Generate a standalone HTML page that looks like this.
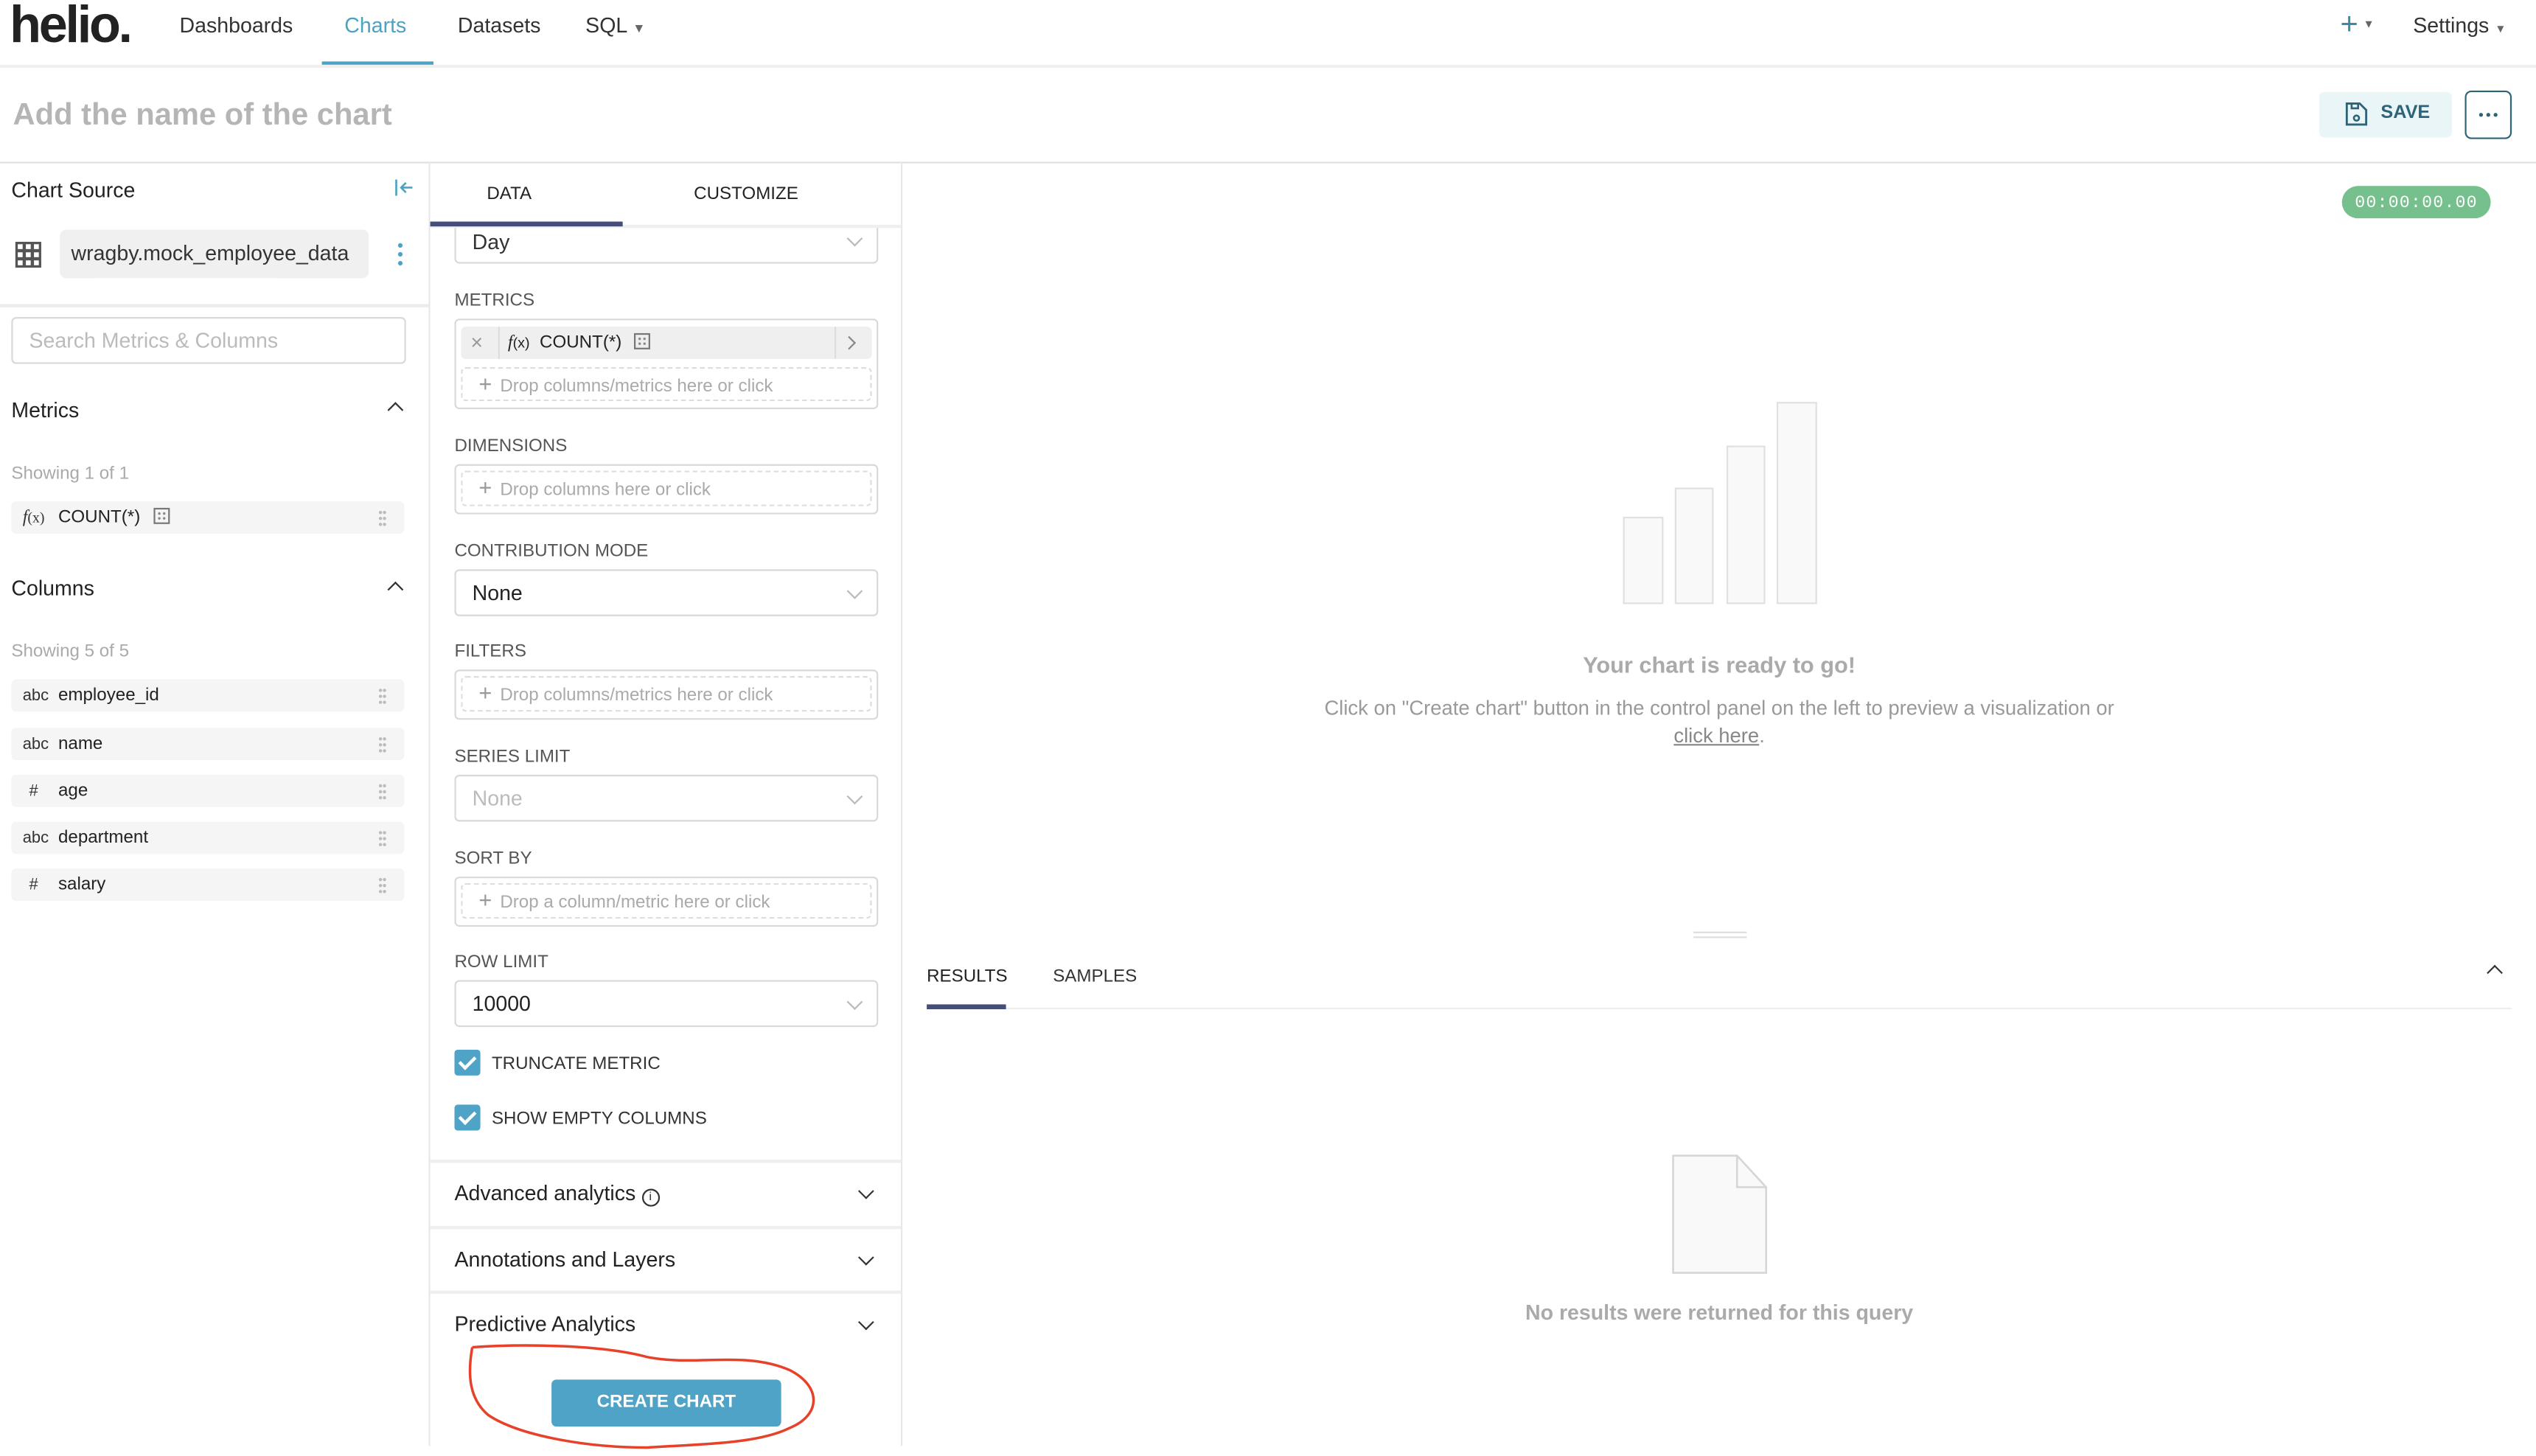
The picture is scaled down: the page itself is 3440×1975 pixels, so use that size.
<!DOCTYPE html>
<html><head><meta charset="utf-8"><style>
html,body{margin:0;padding:0;background:#fff;overflow:hidden;width:3440px;height:1960px}
#w{position:absolute;left:0;top:0;width:1568px;height:894px;transform:scale(2.19388);transform-origin:0 0;font-family:"Liberation Sans",sans-serif;color:#333}
.a{position:absolute;white-space:nowrap}
.hl{position:absolute;height:1px;background:#e6e6e6}
.vl{position:absolute;width:1px;background:#e6e6e6}
.lbl{font-size:11px;color:#555;}
.box{position:absolute;border:1px solid #d9d9d9;border-radius:3px;background:#fff;box-sizing:border-box}
.dash{position:absolute;border:1px dashed #ddd;border-radius:3px;box-sizing:border-box;font-size:11px;color:#aaa;padding-left:10px;line-height:19px}
.dash b{font-weight:normal;font-size:14px;color:#999;margin-right:5px}
.sel{position:absolute;left:281px;width:262px;border:1px solid #d9d9d9;border-radius:3px;box-sizing:border-box;font-size:13px;padding-left:10px}
.chev{position:absolute;right:10px;width:6px;height:6px;border-right:1px solid #bbb;border-bottom:1px solid #bbb;transform:rotate(45deg)}
.row{position:absolute;left:7px;width:243px;height:20px;background:#f5f5f5;border-radius:3px;font-size:11px;line-height:20px}
.row .t{position:absolute;left:7px;top:0;line-height:21px;font-size:10px;color:#333}
.row .n{position:absolute;left:29px;color:#222}
.grip{position:absolute;right:11px;top:5px;width:5px;height:11px;background:radial-gradient(circle,#bbb 0.9px,transparent 1.1px) 0 0/2.5px 3.7px}
.cb{position:absolute;left:281px;width:16px;height:16px;background:#4fa3c7;border-radius:2px}
.cb:after{content:"";position:absolute;left:5px;top:2px;width:4px;height:8px;border-right:2px solid #fff;border-bottom:2px solid #fff;transform:rotate(45deg)}
.dn{position:absolute;left:532px;width:6px;height:6px;border-right:1px solid #333;border-bottom:1px solid #333;transform:rotate(45deg)}
.calc{display:inline-block;width:8px;height:8px;border:1px solid #777;margin-left:5px;vertical-align:-1px;position:relative}
.calc:before{content:"";position:absolute;left:1px;top:1px;width:6px;height:6px;background:radial-gradient(circle,#888 0.7px,transparent 0.9px) 0 0/3px 3px}
</style></head><body><div id="w">
<!-- header -->
<div class="a" style="left:6px;top:-3px;font-size:32px;font-weight:bold;color:#222;letter-spacing:-1.5px">helio.</div>
<div class="a" style="left:111px;top:8px;font-size:13px;color:#333">Dashboards</div>
<div class="a" style="left:213px;top:8px;font-size:13px;color:#4ba3c3">Charts</div>
<div style="position:absolute;left:199px;top:38px;width:69px;height:3px;background:#4ba3c3"></div>
<div class="a" style="left:283px;top:8px;font-size:13px;color:#333">Datasets</div>
<div class="a" style="left:362px;top:8px;font-size:13px;color:#333">SQL <span style="font-size:8px;color:#666">▼</span></div>
<div class="a" style="left:1447px;top:5px;font-size:19px;color:#3d8aa8">+<span style="font-size:7px;color:#666;vertical-align:4px;margin-left:3px">▼</span></div>
<div class="a" style="left:1492px;top:8px;font-size:13px;color:#333">Settings <span style="font-size:7px;color:#666">▼</span></div>
<div class="hl" style="left:0;top:40px;width:1568px;background:#f0f0f0;height:2px"></div>
<!-- title -->
<div class="a" style="left:8px;top:61px;font-size:19px;font-weight:bold;color:#b5b5b5">Add the name of the chart</div>
<div style="position:absolute;left:1434px;top:57px;width:82px;height:28px;background:#eaf5f8;border-radius:3px"></div>
<svg class="a" style="left:1450px;top:63px" width="14" height="15" viewBox="0 0 14 15"><path d="M1 1h8l4 4v9H1z" fill="none" stroke="#2d6478" stroke-width="1.3"/><path d="M4 1v3h4V1" fill="none" stroke="#2d6478" stroke-width="1.2"/><circle cx="7" cy="10" r="1.6" fill="none" stroke="#2d6478" stroke-width="1.2"/></svg>
<div class="a" style="left:1472px;top:64px;font-size:11.5px;font-weight:bold;color:#2d6478">SAVE</div>
<div style="position:absolute;left:1524px;top:56px;width:29px;height:30px;border:1px solid #2d6478;border-radius:4px;box-sizing:border-box"></div>
<svg class="a" style="left:1532px;top:69px" width="13" height="4"><circle cx="2" cy="2" r="1.2" fill="#2d6478"/><circle cx="6.5" cy="2" r="1.2" fill="#2d6478"/><circle cx="11" cy="2" r="1.2" fill="#2d6478"/></svg>
<div class="hl" style="left:0;top:100px;width:1568px;background:#e0e0e0"></div>
<!-- left panel -->
<div class="vl" style="left:265px;top:100px;height:794px;background:#e8e8e8"></div>
<div class="a" style="left:7px;top:110px;font-size:13px;color:#222">Chart Source</div>
<svg class="a" style="left:244px;top:111px" width="12" height="10"><path d="M1 0v10M11 5H4M7 2L4 5l3 3" fill="none" stroke="#4ba3c3" stroke-width="1.2"/></svg>
<svg class="a" style="left:9px;top:149px" width="18" height="18"><rect x="0.5" y="0.5" width="16" height="16" fill="#555"/><g fill="#fff"><rect x="2" y="2" width="3" height="3"/><rect x="7" y="2" width="3" height="3"/><rect x="12" y="2" width="3" height="3"/><rect x="2" y="7" width="3" height="3"/><rect x="7" y="7" width="3" height="3"/><rect x="12" y="7" width="3" height="3"/><rect x="2" y="12" width="3" height="3"/><rect x="7" y="12" width="3" height="3"/><rect x="12" y="12" width="3" height="3"/></g></svg>
<div style="position:absolute;left:37px;top:142px;width:191px;height:30px;background:#f0f0f0;border-radius:4px"></div>
<div class="a" style="left:44px;top:149px;font-size:13px;color:#333">wragby.mock_employee_data</div>
<div style="position:absolute;left:246px;top:149px;width:3px;height:16px;background:radial-gradient(circle,#4ba3c3 1.3px,transparent 1.5px) 0 0/3px 5.5px"></div>
<div class="hl" style="left:0;top:188px;width:265px;height:2px;background:#ececec"></div>
<div class="box" style="left:7px;top:196px;width:244px;height:29px"></div>
<div class="a" style="left:18px;top:203px;font-size:13px;color:#bbb">Search Metrics &amp; Columns</div>
<div class="a" style="left:7px;top:246px;font-size:13px;color:#222">Metrics</div>
<div class="a" style="left:241px;top:250px;width:6px;height:6px;border-left:1.3px solid #333;border-top:1.3px solid #333;transform:rotate(45deg)"></div>
<div class="a" style="left:7px;top:287px;font-size:11px;color:#aaa">Showing 1 of 1</div>
<div class="row" style="top:310px"><span class="t" style="font-family:'Liberation Serif',serif;font-style:italic;font-size:11px">f<span style="font-style:normal;font-size:9px">(x)</span></span><span class="n" style="left:29px">COUNT(*) <span class="calc"></span></span><div class="grip"></div></div>
<div class="a" style="left:7px;top:356px;font-size:13px;color:#222">Columns</div>
<div class="a" style="left:241px;top:361px;width:6px;height:6px;border-left:1.3px solid #333;border-top:1.3px solid #333;transform:rotate(45deg)"></div>
<div class="a" style="left:7px;top:397px;font-size:11px;color:#aaa">Showing 5 of 5</div>
<div class="row" style="top:420px"><span class="t">abc</span><span class="n">employee_id</span><div class="grip"></div></div>
<div class="row" style="top:450px"><span class="t">abc</span><span class="n">name</span><div class="grip"></div></div>
<div class="row" style="top:479px"><span class="t" style="left:11px">#</span><span class="n">age</span><div class="grip"></div></div>
<div class="row" style="top:508px"><span class="t">abc</span><span class="n">department</span><div class="grip"></div></div>
<div class="row" style="top:537px"><span class="t" style="left:11px">#</span><span class="n">salary</span><div class="grip"></div></div>
<!-- middle -->
<div class="vl" style="left:557px;top:100px;height:794px;background:#e8e8e8"></div>
<div class="sel" style="top:135px;height:28px;line-height:28px;"><span>Day</span><div class="chev" style="top:8px"></div></div>
<div style="position:absolute;left:266px;top:101px;width:291px;height:39px;background:#fff"></div>
<div class="a" style="left:301px;top:114px;font-size:11px;color:#222">DATA</div>
<div class="a" style="left:429px;top:114px;font-size:11px;color:#222">CUSTOMIZE</div>
<div class="hl" style="left:266px;top:139px;width:291px;height:2px;background:#efefef"></div>
<div style="position:absolute;left:266px;top:137px;width:119px;height:3px;background:#444e78"></div>
<div class="a lbl" style="left:281px;top:180px">METRICS</div>
<div class="box" style="left:281px;top:197px;width:262px;height:56px"></div>
<div style="position:absolute;left:285px;top:202px;width:254px;height:20px;background:#efefef;border-radius:3px"></div>
<div class="vl" style="left:308px;top:202px;height:20px;background:#ddd"></div>
<div class="vl" style="left:516px;top:202px;height:20px;background:#ddd"></div>
<div class="a" style="left:291px;top:204px;font-size:13px;color:#999">×</div>
<div class="a" style="left:314px;top:206px;font-size:11px;color:#222"><i style="font-family:'Liberation Serif',serif">f</i><span style="font-size:9px">(x)</span>&nbsp; COUNT(*) <span class="calc"></span></div>
<div class="a" style="left:522px;top:209px;width:5px;height:5px;border-right:1.3px solid #888;border-top:1.3px solid #888;transform:rotate(45deg)"></div>
<div class="dash" style="left:285px;top:227px;width:254px;height:21px"><b>+</b>Drop columns/metrics here or click</div>
<div class="a lbl" style="left:281px;top:270px">DIMENSIONS</div>
<div class="box" style="left:281px;top:287px;width:262px;height:31px"></div>
<div class="dash" style="left:285px;top:291px;width:254px;height:22px"><b>+</b>Drop columns here or click</div>
<div class="a lbl" style="left:281px;top:335px">CONTRIBUTION MODE</div>
<div class="sel" style="top:352px;height:29px;line-height:28px;color:#222">None<div class="chev" style="top:9px"></div></div>
<div class="a lbl" style="left:281px;top:397px">FILTERS</div>
<div class="box" style="left:281px;top:414px;width:262px;height:31px"></div>
<div class="dash" style="left:285px;top:418px;width:254px;height:22px"><b>+</b>Drop columns/metrics here or click</div>
<div class="a lbl" style="left:281px;top:462px">SERIES LIMIT</div>
<div class="sel" style="top:479px;height:29px;line-height:28px;color:#bbb">None<div class="chev" style="top:9px"></div></div>
<div class="a lbl" style="left:281px;top:525px">SORT BY</div>
<div class="box" style="left:281px;top:542px;width:262px;height:31px"></div>
<div class="dash" style="left:285px;top:546px;width:254px;height:22px"><b>+</b>Drop a column/metric here or click</div>
<div class="a lbl" style="left:281px;top:589px">ROW LIMIT</div>
<div class="sel" style="top:606px;height:29px;line-height:28px;color:#222">10000<div class="chev" style="top:9px"></div></div>
<div class="cb" style="top:649px"></div>
<div class="a" style="left:304px;top:652px;font-size:11px;color:#333">TRUNCATE METRIC</div>
<div class="cb" style="top:683px"></div>
<div class="a" style="left:304px;top:686px;font-size:11px;color:#333">SHOW EMPTY COLUMNS</div>
<div class="hl" style="left:266px;top:717px;width:291px;background:#efefef;height:2px"></div>
<div class="a" style="left:281px;top:730px;font-size:13px;color:#222">Advanced analytics <span style="display:inline-block;width:9px;height:9px;border:1px solid #333;border-radius:50%;font-size:7px;text-align:center;line-height:9px;vertical-align:0">i</span></div>
<div class="dn" style="top:733px"></div>
<div class="hl" style="left:266px;top:758px;width:291px;background:#efefef;height:2px"></div>
<div class="a" style="left:281px;top:771px;font-size:13px;color:#222">Annotations and Layers</div>
<div class="dn" style="top:774px"></div>
<div class="hl" style="left:266px;top:798px;width:291px;background:#efefef;height:2px"></div>
<div class="a" style="left:281px;top:811px;font-size:13px;color:#222">Predictive Analytics</div>
<div class="dn" style="top:814px"></div>
<div style="position:absolute;left:341px;top:853px;width:142px;height:29px;background:#4fa3c7;border-radius:3px"></div>
<div class="a" style="left:341px;top:861px;width:142px;text-align:center;font-size:11px;font-weight:bold;color:#fff">CREATE CHART</div>
<svg class="a" style="left:280px;top:825px" width="240" height="75"><path d="M12 8 C40 6 90 6 120 14 C150 20 180 10 208 22 C228 32 228 50 208 58 C188 68 150 68 120 70 C80 70 40 62 22 50 C10 40 9 25 12 8" fill="none" stroke="#e8412a" stroke-width="1.6"/></svg>
<!-- right -->
<div style="position:absolute;left:1448px;top:115px;width:92px;height:20px;background:#76c08e;border-radius:10px"></div>
<div class="a" style="left:1448px;top:119.5px;width:92px;text-align:center;font-family:'Liberation Mono',monospace;font-size:10.5px;color:#fff;letter-spacing:0.6px">00:00:00.00</div>
<svg class="a" style="left:1000px;top:245px" width="130" height="132"><g fill="#f9f9f9" stroke="#e0e0e0" stroke-width="1"><rect x="4" y="75" width="24" height="53"/><rect x="36" y="57" width="23" height="71"/><rect x="68" y="31" width="23" height="97"/><rect x="99" y="4" width="24" height="124"/></g></svg>
<div class="a" style="left:863px;top:403px;width:400px;text-align:center;font-size:14px;font-weight:bold;color:#aaa">Your chart is ready to go!</div>
<div class="a" style="left:763px;top:430px;width:600px;text-align:center;font-size:12.5px;color:#999;line-height:17px">Click on "Create chart" button in the control panel on the left to preview a visualization or<br><span style="text-decoration:underline;color:#888">click here</span>.</div>
<div class="hl" style="left:1047px;top:576px;width:33px;background:#ddd"></div>
<div class="hl" style="left:1047px;top:579px;width:33px;background:#ddd"></div>
<div class="a" style="left:573px;top:598px;font-size:11px;color:#222">RESULTS</div>
<div class="a" style="left:651px;top:598px;font-size:11px;color:#333">SAMPLES</div>
<div class="hl" style="left:573px;top:623px;width:980px;background:#eee"></div>
<div style="position:absolute;left:573px;top:621px;width:49px;height:3px;background:#444e78"></div>
<div class="a" style="left:1539px;top:598px;width:6px;height:6px;border-left:1.3px solid #333;border-top:1.3px solid #333;transform:rotate(45deg)"></div>
<svg class="a" style="left:1033px;top:713px" width="62" height="76"><path d="M1.5 1.5H41L59 21V74H1.5Z" fill="#f9f9f9" stroke="#d6d6d6" stroke-width="1.2"/><path d="M41 1.5V21H59" fill="none" stroke="#d6d6d6" stroke-width="1.2"/></svg>
<div class="a" style="left:863px;top:804px;width:400px;text-align:center;font-size:13px;font-weight:bold;color:#aaa">No results were returned for this query</div>
</div></body></html>
